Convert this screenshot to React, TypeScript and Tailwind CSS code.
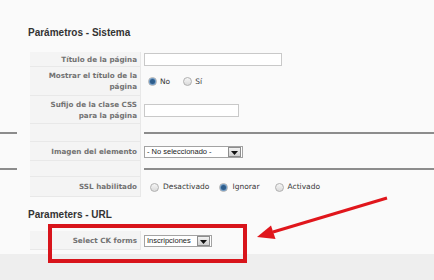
import React from 'react';

const labelFont = "font-['DejaVu_Sans',sans-serif] font-bold text-[7.2px] text-[#727272]";
const valueFont = "font-['DejaVu_Sans',sans-serif] text-[7.5px] text-[#383838]";

const Radio: React.FC<{ checked?: boolean }> = ({ checked }) => (
  <span className="flex h-[9px] w-[9px] shrink-0 items-center justify-center rounded-full border border-[#b0b0b0] bg-gradient-to-b from-[#f6f6f6] to-[#dadada]">
    {checked && <span className="h-[5px] w-[5px] rounded-full bg-[#2d5d8c] ring-1 ring-[#6f9ac4]" />}
  </span>
);

const Select: React.FC<{ value: string; width: string }> = ({ value, width }) => (
  <div className={`flex h-[12px] items-center justify-between border border-[#a3a3a3] bg-white pl-[2px] pr-[1px] ${width}`}>
    <span className="font-['Liberation_Sans',sans-serif] text-[7.5px] leading-none text-[#222]">{value}</span>
    <span className="flex h-[10px] w-[13px] items-end justify-center border border-[#8d8d8d] bg-gradient-to-b from-[#f2f2f2] to-[#cfcfcf] pb-[1px]">
      <svg width="7" height="4" viewBox="0 0 7 4">
        <path d="M0 0h7L3.5 4z" fill="#111" />
      </svg>
    </span>
  </div>
);

const Row: React.FC<{ h: string; label?: React.ReactNode; line?: boolean; children?: React.ReactNode }> = ({ h, label, line, children }) => (
  <div className={`flex ${h}`}>
    <div className="flex w-[30px] shrink-0 items-center">
      {line && <div className="h-[2px] w-[17px] bg-[#8c8c8c]" />}
    </div>
    <div className={`flex w-[111px] shrink-0 items-center justify-end border-b border-r border-[#e8e8e8] bg-[#f4f4f4] pr-[3px] text-right leading-[11px] ${labelFont}`}>
      {label}
    </div>
    <div className="flex flex-1 items-center pl-[3px]">
      {line && <div className="h-[2px] w-full bg-[#8c8c8c]" />}
      {children}
    </div>
  </div>
);

export default function App() {
  return (
    <div className="relative h-[280px] w-[434px] overflow-hidden bg-[#fafafa]">
      <div className="flex h-[254px] flex-col pt-[26px]">
        <h2 className="h-[14px] pl-[28px] font-['Liberation_Sans',sans-serif] text-[10px] font-bold leading-[14px] text-[#333]">
          Parámetros - Sistema
        </h2>
        <div className="mt-[12px] flex flex-col">
          <Row h="h-[15px]" label="Título de la página">
            <div className="h-[13px] w-[138px] border border-[#c9c9c9] bg-white" />
          </Row>
          <Row h="h-[29px]" label={<span>Mostrar el título de la<br />página</span>}>
            <div className={`flex items-center gap-[3px] pl-[4px] ${valueFont}`}>
              <Radio checked />
              <span className="mr-[10px]">No</span>
              <Radio />
              <span>Sí</span>
            </div>
          </Row>
          <Row h="h-[28px]" label={<span>Sufijo de la clase CSS<br />para la página</span>}>
            <div className="h-[13px] w-[95px] border border-[#c9c9c9] bg-white" />
          </Row>
          <Row h="h-[18px]" line />
          <Row h="h-[19px]" label="Imagen del elemento">
            <Select value="- No seleccionado -" width="w-[99px]" />
          </Row>
          <Row h="h-[16px]" line />
          <Row h="h-[20px]" label="SSL habilitado">
            <div className={`flex items-center gap-[4px] pl-[6px] ${valueFont}`}>
              <Radio />
              <span className="mr-[6px]">Desactivado</span>
              <Radio checked />
              <span className="mr-[11px]">Ignorar</span>
              <Radio />
              <span>Activado</span>
            </div>
          </Row>
        </div>
        <h2 className="mt-[11px] h-[14px] pl-[28px] font-['Liberation_Sans',sans-serif] text-[10px] font-bold leading-[14px] text-[#333]">
          Parameters - URL
        </h2>
        <div className="mt-[9px]">
          <Row h="h-[19px]" label="Select CK forms">
            <Select value="Inscripciones" width="w-[68px]" />
          </Row>
        </div>
      </div>
      <div className="h-[26px] bg-[#eeeeee]" />

      {/* annotation */}
      <div className="absolute left-[48px] top-[224px] h-[39px] w-[199px] border-[4px] border-[#d8141b]" />
      <svg className="absolute left-0 top-0" width="434" height="280" viewBox="0 0 434 280">
        <line x1="387" y1="198" x2="273" y2="232" stroke="#e0161c" strokeWidth="3" />
        <polygon points="257,237 275.5,239 271,225.5" fill="#e0161c" />
      </svg>
    </div>
  );
}
